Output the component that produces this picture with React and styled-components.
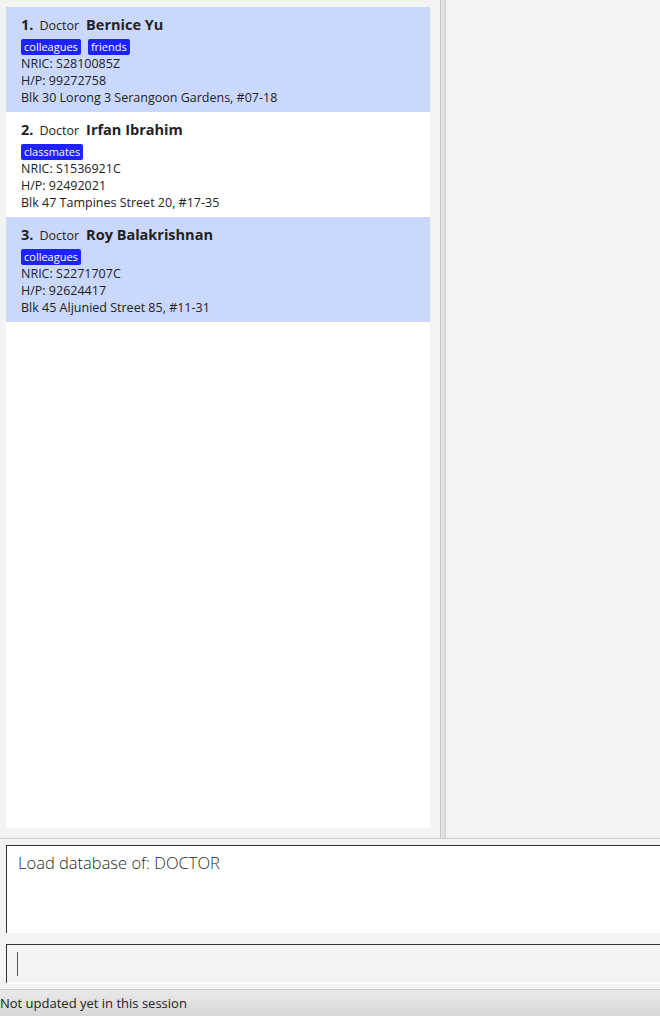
import React from 'react';
import styled, { createGlobalStyle } from 'styled-components';

const GlobalStyle = createGlobalStyle`
  html, body {
    margin: 0;
    padding: 0;
    background: #f3f3f3;
  }
  body {
    font-family: "Open Sans", "Noto Sans", sans-serif;
    color: #222;
    overflow: hidden;
  }
`;

const Window = styled.div`
  width: 660px;
  height: 1016px;
  display: flex;
  flex-direction: column;
  overflow: hidden;
  background: #f3f3f3;
`;

const SplitPane = styled.div`
  display: flex;
  height: 839px;
  border-bottom: 1px solid #cdcdcd;
  box-sizing: border-box;
`;

const ListPane = styled.div`
  width: 440px;
  padding: 7px 10px 10px 6px;
  box-sizing: border-box;
  display: flex;
`;

const ListView = styled.div`
  flex: 1;
  background: #ffffff;
  display: flex;
  flex-direction: column;
`;

const Divider = styled.div`
  width: 6px;
  box-sizing: border-box;
  border-left: 1px solid #c6c6c6;
  border-right: 1px solid #d2d2d2;
  background: linear-gradient(to right, #e6e6e6, #dcdcdc);
`;

const SidePane = styled.div`
  flex: 1;
  background: #f3f3f3;
`;

const Card = styled.div`
  height: 105px;
  box-sizing: border-box;
  padding: 8px 15px 0;
  background: ${({ $selected }) => ($selected ? '#cad8fe' : '#ffffff')};
`;

const TitleRow = styled.div`
  display: flex;
  align-items: baseline;
  height: 20px;
  line-height: 20px;
  white-space: nowrap;
`;

const Index = styled.span`
  font-size: 14.5px;
  font-weight: 700;
  margin-right: 6px;
`;

const Role = styled.span`
  font-size: 12.5px;
  margin-right: 7px;
`;

const Name = styled.span`
  font-size: 14.5px;
  font-weight: 700;
`;

const Tags = styled.div`
  display: flex;
  gap: 7px;
  margin-top: 4px;
  height: 16px;
`;

const Tag = styled.span`
  background: #1d22ff;
  color: #ffffff;
  font-size: 11px;
  line-height: 16px;
  padding: 0 3px;
  border-radius: 2px;
`;

const Detail = styled.div`
  font-size: 12.5px;
  line-height: 17px;
  white-space: nowrap;
  &:first-of-type {
    margin-top: 1px;
  }
`;

const Console = styled.div`
  display: flex;
  flex-direction: column;
  padding: 6px 0 0 6px;
`;

const ResultBox = styled.div`
  height: 88px;
  box-sizing: border-box;
  background: #ffffff;
  border-top: 1px solid #333333;
  border-left: 1px solid #333333;
  padding: 5px 11px;
  font-size: 16.5px;
  font-weight: 300;
  color: #2a2a2a;
`;

const CommandBox = styled.div`
  margin-top: 11px;
  height: 40px;
  box-sizing: border-box;
  border-top: 1px solid #333333;
  border-left: 1px solid #333333;
  border-bottom: 2px solid #ffffff;
  padding: 7px 0 0 10px;
`;

const Caret = styled.div`
  width: 1px;
  height: 24px;
  background: #555555;
`;

const StatusBar = styled.div`
  margin-top: 5px;
  flex: 1;
  border-top: 1px solid #cccccc;
  background: linear-gradient(to bottom, #e9e9e9, #d8d8d8);
  font-size: 13px;
  line-height: 18px;
  color: #222;
  padding-top: 4px;
  box-sizing: border-box;
`;

const people = [
  {
    name: 'Bernice Yu',
    tags: ['colleagues', 'friends'],
    nric: 'S2810085Z',
    phone: '99272758',
    address: 'Blk 30 Lorong 3 Serangoon Gardens, #07-18',
  },
  {
    name: 'Irfan Ibrahim',
    tags: ['classmates'],
    nric: 'S1536921C',
    phone: '92492021',
    address: 'Blk 47 Tampines Street 20, #17-35',
  },
  {
    name: 'Roy Balakrishnan',
    tags: ['colleagues'],
    nric: 'S2271707C',
    phone: '92624417',
    address: 'Blk 45 Aljunied Street 85, #11-31',
  },
];

const App = () => {
  return (
    <Window>
      <GlobalStyle />
      <SplitPane>
        <ListPane>
          <ListView>
            {people.map((p, i) => (
              <Card key={p.nric} $selected={i % 2 === 0}>
                <TitleRow>
                  <Index>{i + 1}.</Index>
                  <Role>Doctor</Role>
                  <Name>{p.name}</Name>
                </TitleRow>
                <Tags>
                  {p.tags.map((t) => (
                    <Tag key={t}>{t}</Tag>
                  ))}
                </Tags>
                <Detail>NRIC: {p.nric}</Detail>
                <Detail>H/P: {p.phone}</Detail>
                <Detail>{p.address}</Detail>
              </Card>
            ))}
          </ListView>
        </ListPane>
        <Divider />
        <SidePane />
      </SplitPane>
      <Console>
        <ResultBox>Load database of: DOCTOR</ResultBox>
        <CommandBox>
          <Caret />
        </CommandBox>
      </Console>
      <StatusBar>Not updated yet in this session</StatusBar>
    </Window>
  );
};

export default App;
